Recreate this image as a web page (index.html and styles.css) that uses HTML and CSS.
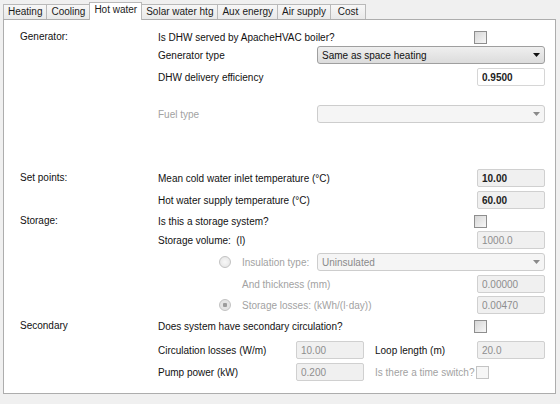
FILE: index.html
```html
<!DOCTYPE html>
<html lang="en">
    <head>
        <meta charset="utf-8">
        <title>Hot water</title>
        <link rel="stylesheet" href="styles.css">
    </head>
    <body>
        <div class="tabs">
            <div class="tab">Heating</div>
            <div class="tab">Cooling</div>
            <div class="tab active">Hot water</div>
            <div class="tab">Solar water htg</div>
            <div class="tab">Aux energy</div>
            <div class="tab">Air supply</div>
            <div class="tab">Cost</div>
        </div>
        <div class="panel">
            <!-- Generator -->
            <div class="row">
                <div class="side">Generator:</div>
                <div class="main">
                    <span>Is DHW served by ApacheHVAC boiler?</span>
                    <input type="checkbox" class="check">
                </div>
            </div>
            <div class="row flush">
                <div class="side"></div>
                <div class="main">
                    <span>Generator type</span>
                    <div class="combo">
                        <span>Same as space heating</span>
                        <svg viewBox="0 0 7 4"><path d="M0 0h7L3.5 4z"/></svg>
                    </div>
                </div>
            </div>
            <div class="row">
                <div class="side"></div>
                <div class="main">
                    <span>DHW delivery efficiency</span>
                    <input type="text" class="field strong" value="0.9500">
                </div>
            </div>
            <div class="row fuel">
                <div class="side"></div>
                <div class="main">
                    <span class="dim">Fuel type</span>
                    <div class="combo off">
                        <span></span>
                        <svg viewBox="0 0 7 4"><path d="M0 0h7L3.5 4z"/></svg>
                    </div>
                </div>
            </div>

            <!-- Set points -->
            <div class="row setpoints">
                <div class="side">Set points:</div>
                <div class="main">
                    <span>Mean cold water inlet temperature (°C)</span>
                    <input type="text" class="field ro strong" value="10.00" readonly>
                </div>
            </div>
            <div class="row">
                <div class="side"></div>
                <div class="main">
                    <span>Hot water supply temperature (°C)</span>
                    <input type="text" class="field ro strong" value="60.00" readonly>
                </div>
            </div>

            <!-- Storage -->
            <div class="row tight">
                <div class="side">Storage:</div>
                <div class="main">
                    <span>Is this a storage system?</span>
                    <input type="checkbox" class="check">
                </div>
            </div>
            <div class="row snug">
                <div class="side"></div>
                <div class="main">
                    <span>Storage volume:&nbsp; (l)</span>
                    <input type="text" class="field ro" value="1000.0" disabled>
                </div>
            </div>
            <div class="row">
                <div class="side"></div>
                <div class="main sub">
                    <input type="radio" name="loss" class="radio" disabled>
                    <span class="dim opt">Insulation type:</span>
                    <div class="combo off">
                        <span>Uninsulated</span>
                        <svg viewBox="0 0 7 4"><path d="M0 0h7L3.5 4z"/></svg>
                    </div>
                </div>
            </div>
            <div class="row">
                <div class="side"></div>
                <div class="main sub deep">
                    <span class="dim">And thickness (mm)</span>
                    <input type="text" class="field ro" value="0.00000" disabled>
                </div>
            </div>
            <div class="row tight">
                <div class="side"></div>
                <div class="main sub">
                    <input type="radio" name="loss" class="radio" checked disabled>
                    <span class="dim">Storage losses: (kWh/(l·day))</span>
                    <input type="text" class="field ro" value="0.00470" disabled>
                </div>
            </div>

            <!-- Secondary circulation -->
            <div class="row secondary">
                <div class="side">Secondary</div>
                <div class="main">
                    <span>Does system have secondary circulation?</span>
                    <input type="checkbox" class="check">
                </div>
            </div>
            <div class="row loose">
                <div class="side"></div>
                <div class="main cols">
                    <span>Circulation losses (W/m)</span>
                    <input type="text" class="field ro" value="10.00" disabled>
                    <span class="pair">Loop length (m)</span>
                    <input type="text" class="field ro" value="20.0" disabled>
                </div>
            </div>
            <div class="row">
                <div class="side"></div>
                <div class="main cols">
                    <span>Pump power (kW)</span>
                    <input type="text" class="field ro" value="0.200" disabled>
                    <span class="pair dim">Is there a time switch?</span>
                    <input type="checkbox" class="check off" disabled>
                </div>
            </div>
        </div>
    </body>
</html>
```

FILE: styles.css
```css
* {
    margin: 0;
    padding: 0;
    box-sizing: border-box;
}
body {
    background: #f0f0f0;
    font-family: "Liberation Sans", Arial, sans-serif;
    font-size: 10px;
    color: #111;
}

/* tab strip */
.tabs {
    display: flex;
    align-items: flex-end;
    height: 19px;
    padding-left: 3px;
}
.tab {
    min-width: 36px;
    height: 15px;
    line-height: 14px;
    padding: 0 4px;
    border: 1px solid #b9b9b9;
    border-bottom: none;
    margin-right: -1px;
    background: linear-gradient(#f7f7f7, #e9e9e9);
    text-align: center;
    color: #1a1a1a;
}
.tab.active {
    position: relative;
    z-index: 1;
    height: 18px;
    line-height: 14px;
    margin-bottom: -1px;
    background: #fff;
}

.panel {
    height: 375px;
    margin: 0 4px 0 3px;
    padding: 8px 10px 0 16px;
    background: #fff;
    border: 1px solid #adadad;
}

/* form rows */
.row {
    display: flex;
    height: 18px;
    margin-top: 4px;
}
.row:first-child {
    margin-top: 0;
}
.row.flush { margin-top: 0; }
.row.snug { margin-top: 1px; }
.row.tight { margin-top: 3px; }
.row.secondary { margin-top: 3px; }
.row.loose { margin-top: 6px; }
.row.fuel { margin-top: 19px; }
.row.setpoints { margin-top: 46px; }

.side {
    width: 138px;
    line-height: 18px;
}
.main {
    flex: 1;
    display: flex;
    align-items: center;
}
.main > :last-child {
    margin-left: auto;
}
.main.sub {
    padding-left: 61px;
}
.main.deep {
    padding-left: 84px;
}
.main.cols {
    display: grid;
    grid-template-columns: 138px 68px 1fr 68px;
}
.pair {
    padding-left: 11px;
}
.dim {
    color: #a2a2a2;
}
.opt {
    width: 75px;
}

/* controls */
.field {
    width: 68px;
    height: 18px;
    padding: 0 4px;
    border: 1px solid #d6d6d6;
    border-radius: 2px;
    background: #fff;
    font: inherit;
    color: #111;
    outline: none;
}
.field.ro {
    background: #f0f0f0;
    border-color: #d0d0d0;
    color: #8e8e8e;
}
.field.strong {
    font-weight: bold;
    color: #222;
}
.check {
    appearance: none;
    width: 13px;
    height: 13px;
    margin-right: 58px;
    border: 1px solid #8e8e8e;
    background: linear-gradient(135deg, #d6d6d6, #f7f7f7);
}
.cols .check {
    margin: 0 0 0 -1px;
}
.check.off {
    border-color: #c4c4c4;
    background: #f6f6f6;
}
.radio {
    appearance: none;
    width: 12px;
    height: 12px;
    margin-right: 11px;
    border: 1px solid #c2c2c2;
    border-radius: 50%;
    background: radial-gradient(#f8f8f8, #e2e2e2);
}
.radio:checked {
    background: radial-gradient(circle, #9c9c9c 0 2px, #e4e4e4 2.5px);
}
.combo {
    width: 228px;
    height: 18px;
    display: flex;
    align-items: center;
    justify-content: space-between;
    padding: 0 4px 0 4px;
    border: 1px solid #9f9f9f;
    border-radius: 3px;
    background: linear-gradient(#efefef, #dcdcdc);
}
.combo svg {
    width: 7px;
    height: 4px;
    fill: #111;
}
.combo.off {
    border-color: #cdcdcd;
    background: #f5f5f5;
    color: #8a8a8a;
}
.combo.off svg {
    fill: #8a8a8a;
}
```
